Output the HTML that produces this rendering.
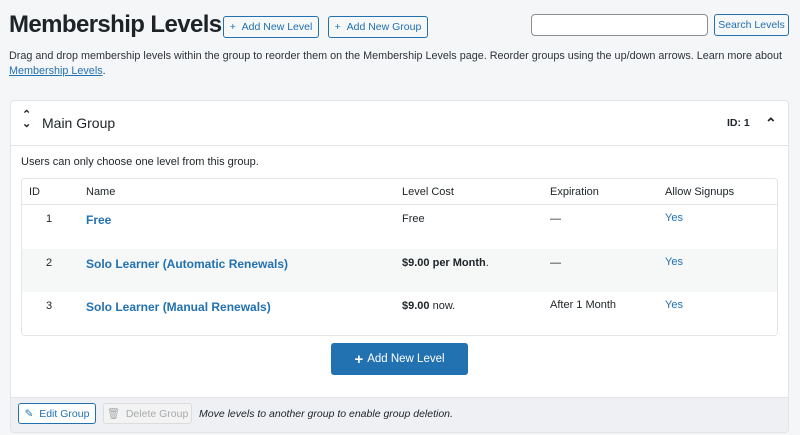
<!DOCTYPE html>
<html><head><style>
*{box-sizing:border-box;margin:0;padding:0}
body{width:800px;height:435px;background:#f5f6f8;font-family:"Liberation Sans",sans-serif;color:#1d2327;position:relative;overflow:hidden}
.a{position:absolute}
.btn{position:absolute;border:1px solid #2271b1;border-radius:3px;color:#2271b1;font-size:10.5px;background:#f6f7f7;display:flex;align-items:center;justify-content:center;white-space:nowrap}
h1{position:absolute;left:9px;top:11px;font-size:24px;font-weight:bold;letter-spacing:-0.6px;white-space:nowrap}
p.d{position:absolute;left:9px;top:49px;font-size:10.8px;line-height:15px;width:790px;color:#2c3338;white-space:nowrap}
a{color:#2271b1}
.card{position:absolute;left:10px;top:100px;width:779px;height:333px;background:#fff;border:1px solid #e2e4e7;border-radius:4px;overflow:hidden}
.tbl{position:absolute;left:10px;top:77px;width:757px;height:158px;border:1px solid #e2e4e7;border-radius:4px;overflow:hidden;font-size:11px}
.row{position:absolute;left:0;width:100%}
.row span{position:absolute}
.nm{color:#2271b1;font-weight:bold;font-size:12px}
.y{color:#2271b1}
</style></head><body>
<h1>Membership Levels</h1>
<div class="btn" style="left:223px;top:16px;width:96px;height:22px">+&nbsp;&nbsp;Add New Level</div>
<div class="btn" style="left:328px;top:16px;width:100px;height:22px">+&nbsp;&nbsp;Add New Group</div>
<div class="a" style="left:531px;top:14px;width:177px;height:22px;border:1px solid #8c8f94;border-radius:4px;background:#fff"></div>
<div class="btn" style="left:714px;top:14px;width:75px;height:22px">Search Levels</div>
<p class="d">Drag and drop membership levels within the group to reorder them on the Membership Levels page. Reorder groups using the up/down arrows. Learn more about<br><a href="#">Membership Levels</a>.</p>
<div class="card">
 <div class="a" style="left:11px;top:10px;font-size:11px;line-height:9px;font-weight:bold">&#8963;<br>&#8964;</div>
 <div class="a" style="left:31px;top:14px;font-size:14px">Main Group</div>
 <div class="a" style="left:716px;top:16px;font-size:10.5px;font-weight:bold">ID: 1</div>
 <div class="a" style="left:754px;top:14px;font-size:14px;font-weight:bold">&#8963;</div>
 <div class="a" style="left:0;top:44px;width:100%;border-top:1px solid #e2e4e7"></div>
 <div class="a" style="left:10px;top:55px;font-size:11px">Users can only choose one level from this group.</div>
 <div class="tbl">
  <div class="row" style="top:0;height:26px;border-bottom:1px solid #e2e4e7"><span style="left:7px;top:7px">ID</span><span style="left:64px;top:7px">Name</span><span style="left:380px;top:7px">Level Cost</span><span style="left:528px;top:7px">Expiration</span><span style="left:643px;top:7px">Allow Signups</span></div>
  <div class="row" style="top:26px;height:44px"><span style="left:24px;top:8px">1</span><span class="nm" style="left:64px;top:8px">Free</span><span style="left:380px;top:8px">Free</span><span style="left:528px;top:8px">—</span><span class="y" style="left:643px;top:7px">Yes</span></div>
  <div class="row" style="top:70px;height:43px;background:#f6f7f7"><span style="left:24px;top:8px">2</span><span class="nm" style="left:64px;top:8px">Solo Learner (Automatic Renewals)</span><span style="left:380px;top:8px"><b>$9.00</b> <b>per Month</b>.</span><span style="left:528px;top:8px">—</span><span class="y" style="left:643px;top:7px">Yes</span></div>
  <div class="row" style="top:113px;height:44px"><span style="left:24px;top:8px">3</span><span class="nm" style="left:64px;top:8px">Solo Learner (Manual Renewals)</span><span style="left:380px;top:8px"><b>$9.00</b> now.</span><span style="left:528px;top:7px">After 1 Month</span><span class="y" style="left:643px;top:7px">Yes</span></div>
 </div>
 <div class="a" style="left:320px;top:242px;width:137px;height:32px;background:#2271b1;border-radius:3px;color:#fff;font-size:11.5px;display:flex;align-items:center;justify-content:center"><b style="font-size:15px;margin-right:4px">+</b>Add New Level</div>
 <div class="a" style="left:0;top:296px;width:100%;height:37px;background:#eef0f4;border-top:1px solid #e2e4e7"></div>
 <div class="btn" style="left:7px;top:302px;width:78px;height:21px;background:#fff">&#9998;&nbsp;&nbsp;Edit Group</div>
 <div class="btn" style="left:92px;top:302px;width:89px;height:21px;background:#f3f3f3;border-color:#dcdcde;color:#a7aaad">&#128465;&nbsp;&nbsp;Delete Group</div>
 <div class="a" style="left:188px;top:307px;font-size:10.5px;font-style:italic">Move levels to another group to enable group deletion.</div>
</div>
</body></html>
